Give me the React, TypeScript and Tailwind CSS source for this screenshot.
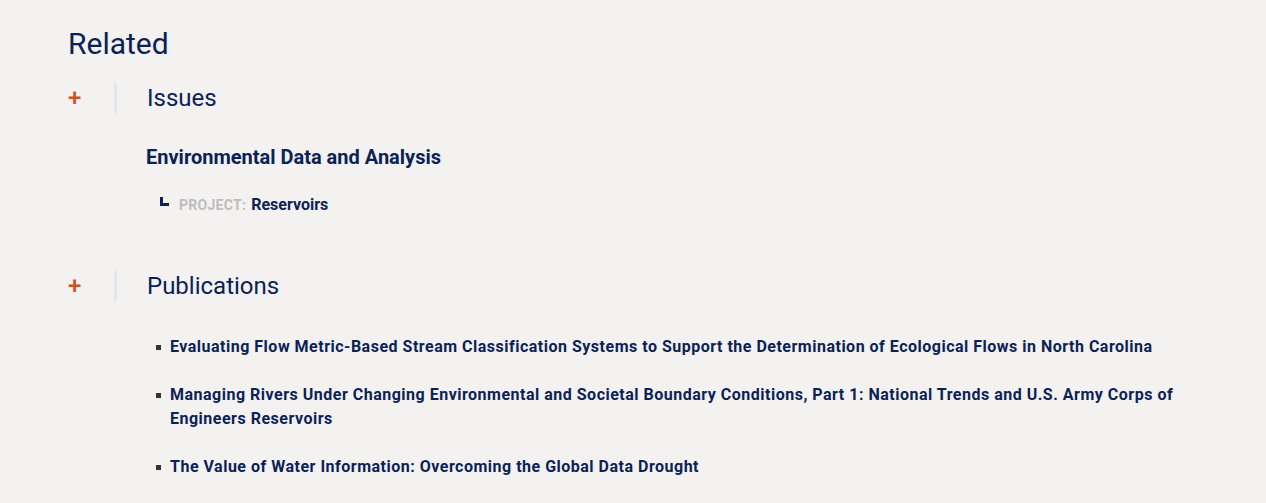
import React from "react";

const navy = "text-[#0b2256]";

const publications = [
	"Evaluating Flow Metric-Based Stream Classification Systems to Support the Determination of Ecological Flows in North Carolina",
	"Managing Rivers Under Changing Environmental and Societal Boundary Conditions, Part 1: National Trends and U.S. Army Corps of Engineers Reservoirs",
	"The Value of Water Information: Overcoming the Global Data Drought",
];

const SectionHeader = ({ title }: { title: string }) => (
	<div className="flex items-center">
		<span className="w-[46px] text-[24px] leading-none font-medium text-[#c9551f]">+</span>
		<span className="h-[30px] w-[3px] bg-[#e2e6ee]" />
		<h3 className={`ml-[30px] text-[24px] leading-[30px] font-normal ${navy}`}>{title}</h3>
	</div>
);

export default function App() {
	return (
		<div className="min-h-[503px] w-full bg-[#f3f2f1] font-['Roboto',sans-serif]">
			<div className="pl-[68px] pt-[27px]">
				<h2 className={`text-[30px] leading-[34px] font-normal ${navy}`}>Related</h2>

				<div className="mt-[22px]">
					<SectionHeader title="Issues" />
					<div className="pl-[78px]">
						<h4 className={`mt-[32px] text-[20px] leading-[24px] font-bold ${navy}`}>Environmental Data and Analysis</h4>
						<div className="mt-[26px] flex items-center pl-[14px]">
							<span className="mb-[7px] mr-[10px] h-[9px] w-[9px] border-b-[3px] border-l-[3px] border-[#0b2256]" />
							<span className="text-[14px] leading-[20px] font-bold tracking-[0.02em] text-[#bdbdbd]">PROJECT:</span>
							<span className={`ml-[5px] text-[16px] leading-[20px] font-bold ${navy}`}>Reservoirs</span>
						</div>
					</div>
				</div>

				<div className="mt-[56px]">
					<SectionHeader title="Publications" />
					<ul className="mt-[34px] flex flex-col gap-[24px] pl-[88px] pr-[80px]">
						{publications.map((p) => (
							<li key={p} className="flex items-start">
								<span className="mt-[10px] mr-[9px] h-[5px] w-[5px] shrink-0 bg-[#333]" />
								<span className={`text-[16px] leading-[24px] font-bold tracking-[0.5px] ${navy}`}>{p}</span>
							</li>
						))}
					</ul>
				</div>
			</div>
		</div>
	);
}
